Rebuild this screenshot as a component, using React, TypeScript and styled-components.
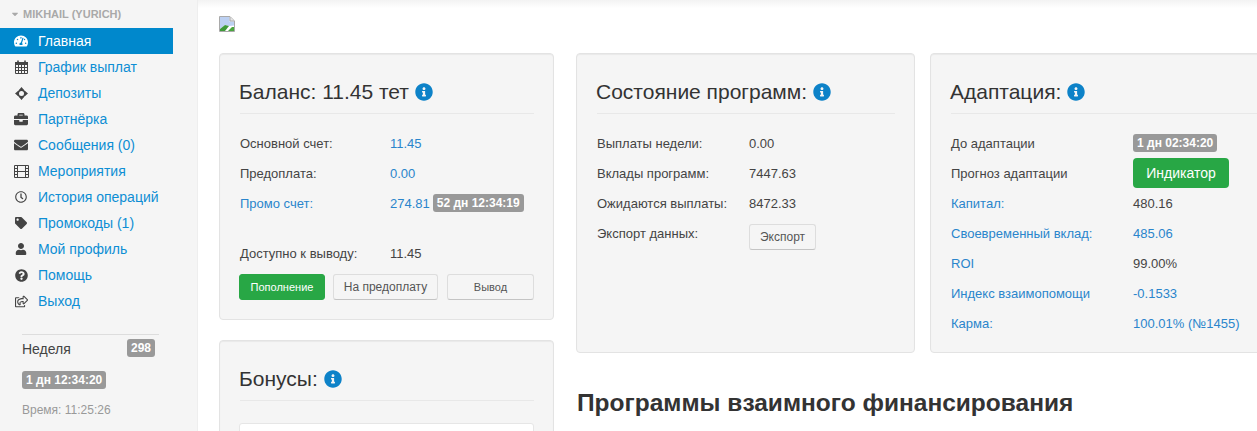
import React from 'react'
import styled, { createGlobalStyle } from 'styled-components'
import {
  FaTachometerAlt,
  FaBriefcase,
  FaEnvelope,
  FaRegClock,
  FaTag,
  FaUser,
  FaQuestionCircle,
  FaRegShareSquare,
  FaInfoCircle,
  FaCaretDown,
} from 'react-icons/fa'

const GlobalStyle = createGlobalStyle`
  html, body {
    margin: 0;
    height: 100%;
    overflow: hidden;
    background: #fff;
    font-family: "Liberation Sans", Arial, sans-serif;
    font-size: 13px;
    color: #333;
  }
`

const Page = styled.div`
  display: flex;
  width: 1257px;
  height: 431px;
  overflow: hidden;
`

const Sidebar = styled.aside`
  flex: 0 0 198px;
  box-sizing: border-box;
  background: #f5f5f5;
  border-right: 1px solid #eee;
  padding-top: 4px;
`

const UserName = styled.div`
  display: flex;
  align-items: center;
  gap: 3px;
  height: 20px;
  margin-bottom: 4px;
  padding-left: 10px;
  font-size: 11px;
  font-weight: bold;
  color: #a9a9a9;
  svg { font-size: 10px; }
`

const Menu = styled.nav`
  width: 173px;
`

const MenuItem = styled.a<{ $active?: boolean }>`
  display: flex;
  align-items: center;
  height: 26px;
  font-size: 14px;
  color: ${(p) => (p.$active ? '#fff' : '#0d8ed4')};
  background: ${(p) => (p.$active ? '#0088cc' : 'transparent')};
`

const MenuIcon = styled.span<{ $active?: boolean; $size?: number }>`
  flex: 0 0 38px;
  display: flex;
  justify-content: center;
  padding-left: 4px;
  box-sizing: border-box;
  font-size: ${(p) => p.$size ?? 14}px;
  color: ${(p) => (p.$active ? '#fff' : '#444')};
`

const WeekBlock = styled.div`
  margin: 20px 0 0 22px;
  width: 137px;
  border-top: 1px solid #ddd;
  padding-top: 4px;
`

const WeekRow = styled.div`
  display: flex;
  justify-content: space-between;
  align-items: center;
  width: 133px;
  height: 18px;
  font-size: 14px;
  color: #444;
`

const WeekName = styled.span`
  margin-top: 2px;
`

const Label = styled.span`
  display: inline-block;
  background: #999;
  color: #fff;
  font-weight: bold;
  font-size: 12px;
  line-height: 18px;
  padding: 0 4px;
  border-radius: 3px;
  white-space: nowrap;
`

const TimerRow = styled.div`
  margin-top: 14px;
  line-height: 18px;
  display: flex;
`

const ClockText = styled.div`
  margin-top: 14px;
  font-size: 12px;
  color: #999;
`

const Main = styled.main`
  position: relative;
  flex: 1;
  min-width: 0;
  box-sizing: border-box;
  padding: 16px 0 0 21px;
`

const TopShade = styled.div`
  position: absolute;
  top: 0;
  left: 0;
  right: 0;
  height: 8px;
  background: linear-gradient(#f3f3f3, #fff);
`

const BrokenImage = styled.svg`
  display: block;
  width: 16px;
  height: 16px;
  margin-bottom: 21px;
`

const Columns = styled.div`
  display: grid;
  grid-template-columns: 335px 339px 345px;
  column-gap: 22px;
  align-items: start;
`

const Stack = styled.div`
  display: flex;
  flex-direction: column;
  gap: 20px;
`

const Panel = styled.section<{ $height: number; $shift?: number }>`
  box-sizing: border-box;
  height: ${(p) => p.$height}px;
  margin-left: ${(p) => p.$shift ?? 0}px;
  padding: 26px 20px 0;
  background: #f5f5f5;
  border: 1px solid #e3e3e3;
  border-radius: 4px;
  box-shadow: inset 0 1px 1px rgba(0, 0, 0, 0.05);
`

const Title = styled.h3`
  display: flex;
  align-items: flex-start;
  gap: 6px;
  margin: 0 -1px 14px 0;
  height: 34px;
  border-bottom: 1px solid #e8e8e8;
  font-size: 21px;
  font-weight: 400;
  line-height: 24px;
  text-indent: -1px;
  color: #333;
  box-sizing: border-box;
  svg { font-size: 18px; color: #0d82c8; margin-top: 3px; }
`

const Row = styled.div<{ $col: number; $gap?: number }>`
  display: grid;
  grid-template-columns: ${(p) => p.$col}px auto;
  justify-content: start;
  align-items: center;
  height: 30px;
  margin-top: ${(p) => p.$gap ?? 0}px;
  color: #444;
`

const Link = styled.a`
  color: #2a85cc;
`

const ValueWithTimer = styled.span`
  display: flex;
  align-items: center;
  gap: 3px;
`

const ButtonRow = styled.div`
  display: grid;
  grid-template-columns: 86px 106px 87px;
  column-gap: 8px;
  margin: 6px 0 0 -1px;
  > :nth-child(2) { width: 105px; }
`

const Button = styled.button<{ $primary?: boolean; $size?: number }>`
  box-sizing: border-box;
  height: 26px;
  padding: 0;
  font-family: inherit;
  font-size: ${(p) => p.$size ?? 12}px;
  border-radius: 3px;
  border: 1px solid ${(p) => (p.$primary ? '#28a745' : '#ddd')};
  border-bottom-color: ${(p) => (p.$primary ? '#28a745' : '#c4c4c4')};
  background: ${(p) => (p.$primary ? '#28a745' : '#f5f5f5')};
  color: ${(p) => (p.$primary ? '#fff' : '#555')};
`

const ExportButton = styled(Button)`
  width: 67px;
  justify-self: start;
  margin: 4px 0 -4px;
`

const IndicatorButton = styled.button`
  display: block;
  box-sizing: border-box;
  width: 96px;
  height: 30px;
  padding: 0;
  border: 0;
  border-radius: 4px;
  font-family: inherit;
  font-size: 14px;
  color: #fff;
  background: #28a745;
`

const WhiteBox = styled.div`
  height: 60px;
  margin: 22px -1px 0;
  background: #fff;
  border: 1px solid #e6e6e6;
  border-radius: 3px;
`

const Heading = styled.h2`
  margin: 35px 0 0 1px;
  font-size: 24.5px;
  line-height: 30px;
  font-weight: bold;
  color: #333;
  white-space: nowrap;
`

const CalendarIcon = () => (
  <svg width="13" height="14" viewBox="0 0 13 14">
    <path d="M0 2H13V5H0Z" fill="#444" />
    <path d="M3 0.5V3M10 0.5V3" stroke="#444" strokeWidth="1.6" />
    <path
      d="M0.5 3V13.5H12.5V3M0.5 7.5H12.5M0.5 10.5H12.5M3.5 5V13.5M6.5 5V13.5M9.5 5V13.5"
      fill="none"
      stroke="#444"
    />
  </svg>
)

const MoveIcon = () => (
  <svg width="13" height="13" viewBox="0 0 13 13">
    <circle cx="6.5" cy="6.5" r="3.4" fill="none" stroke="#444" strokeWidth="1.8" />
    <path d="M6.5 0L9 3H4ZM6.5 13L4 10H9ZM0 6.5L3 4V9ZM13 6.5L10 9V4Z" fill="#444" />
  </svg>
)

const FilmIcon = () => (
  <svg width="15" height="13" viewBox="0 0 15 13">
    <path
      d="M0.5 0.5H14.5V12.5H0.5ZM3.5 0.5V12.5M11.5 0.5V12.5M0.5 3.5H3.5M0.5 6.5H14.5M0.5 9.5H3.5M11.5 3.5H14.5M11.5 9.5H14.5"
      fill="none"
      stroke="#444"
    />
  </svg>
)

const menu = [
  { icon: <FaTachometerAlt />, text: 'Главная', active: true },
  { icon: <CalendarIcon />, text: 'График выплат' },
  { icon: <MoveIcon />, text: 'Депозиты' },
  { icon: <FaBriefcase />, text: 'Партнёрка' },
  { icon: <FaEnvelope />, text: 'Сообщения (0)' },
  { icon: <FilmIcon />, text: 'Мероприятия' },
  { icon: <FaRegClock />, text: 'История операций', size: 12 },
  { icon: <FaTag />, text: 'Промокоды (1)', size: 12 },
  { icon: <FaUser />, text: 'Мой профиль', size: 12 },
  { icon: <FaQuestionCircle />, text: 'Помощь', size: 13 },
  { icon: <FaRegShareSquare />, text: 'Выход', size: 13 },
]

export default function App() {
  return (
    <>
      <GlobalStyle />
      <Page>
        <Sidebar>
          <UserName>
            <FaCaretDown />
            MIKHAIL (YURICH)
          </UserName>
          <Menu>
            {menu.map((item) => (
              <MenuItem key={item.text} $active={item.active}>
                <MenuIcon $active={item.active} $size={item.size}>{item.icon}</MenuIcon>
                {item.text}
              </MenuItem>
            ))}
          </Menu>
          <WeekBlock>
            <WeekRow>
              <WeekName>Неделя</WeekName>
              <Label>298</Label>
            </WeekRow>
            <TimerRow>
              <Label>1 дн 12:34:20</Label>
            </TimerRow>
            <ClockText>Время: 11:25:26</ClockText>
          </WeekBlock>
        </Sidebar>
        <Main>
          <TopShade />
          <BrokenImage viewBox="0 0 16 16">
            <path d="M0.5 0.5H11L15.5 5V15.5H0.5Z" fill="#fff" stroke="#a9a9a9" />
            <path d="M1 1H10.5V5.5H15V9.5L10 10 6 9 1 13Z" fill="#bcd0f2" />
            <path d="M1 15V13L6 9 10 10 6 15Z" fill="#3f9a3a" />
            <path d="M9 15L13 11H15V15Z" fill="#4aa63f" />
            <path d="M11 1V5H15" fill="#e6e6e6" stroke="#a9a9a9" />
          </BrokenImage>
          <Columns>
            <Stack>
              <Panel $height={267}>
                <Title>
                  Баланс: 11.45 тет <FaInfoCircle />
                </Title>
                <Row $col={150}>
                  Основной счет:
                  <Link>11.45</Link>
                </Row>
                <Row $col={150}>
                  Предоплата:
                  <Link>0.00</Link>
                </Row>
                <Row $col={150}>
                  <Link>Промо счет:</Link>
                  <ValueWithTimer>
                    <Link>274.81</Link>
                    <Label>52 дн 12:34:19</Label>
                  </ValueWithTimer>
                </Row>
                <Row $col={150} $gap={20}>
                  Доступно к выводу:
                  <span>11.45</span>
                </Row>
                <ButtonRow>
                  <Button $primary $size={11}>Пополнение</Button>
                  <Button>На предоплату</Button>
                  <Button $size={11}>Вывод</Button>
                </ButtonRow>
              </Panel>
              <Panel $height={120}>
                <Title>
                  Бонусы: <FaInfoCircle />
                </Title>
                <WhiteBox />
              </Panel>
            </Stack>
            <div>
              <Panel $height={300}>
                <Title>
                  Состояние программ: <FaInfoCircle />
                </Title>
                <Row $col={152}>
                  Выплаты недели:
                  <span>0.00</span>
                </Row>
                <Row $col={152}>
                  Вклады программ:
                  <span>7447.63</span>
                </Row>
                <Row $col={152}>
                  Ожидаются выплаты:
                  <span>8472.33</span>
                </Row>
                <Row $col={152}>
                  Экспорт данных:
                  <ExportButton $size={12}>Экспорт</ExportButton>
                </Row>
              </Panel>
              <Heading>Программы взаимного финансирования</Heading>
            </div>
            <Panel $height={300} $shift={-7}>
              <Title>
                Адаптация: <FaInfoCircle />
              </Title>
              <Row $col={182}>
                До адаптации
                <span><Label>1 дн 02:34:20</Label></span>
              </Row>
              <Row $col={182}>
                Прогноз адаптации
                <span><IndicatorButton>Индикатор</IndicatorButton></span>
              </Row>
              <Row $col={182}>
                <Link>Капитал:</Link>
                <span>480.16</span>
              </Row>
              <Row $col={182}>
                <Link>Своевременный вклад:</Link>
                <Link>485.06</Link>
              </Row>
              <Row $col={182}>
                <Link>ROI</Link>
                <span>99.00%</span>
              </Row>
              <Row $col={182}>
                <Link>Индекс взаимопомощи</Link>
                <Link>-0.1533</Link>
              </Row>
              <Row $col={182}>
                <Link>Карма:</Link>
                <Link>100.01% (№1455)</Link>
              </Row>
            </Panel>
          </Columns>
        </Main>
      </Page>
    </>
  )
}
